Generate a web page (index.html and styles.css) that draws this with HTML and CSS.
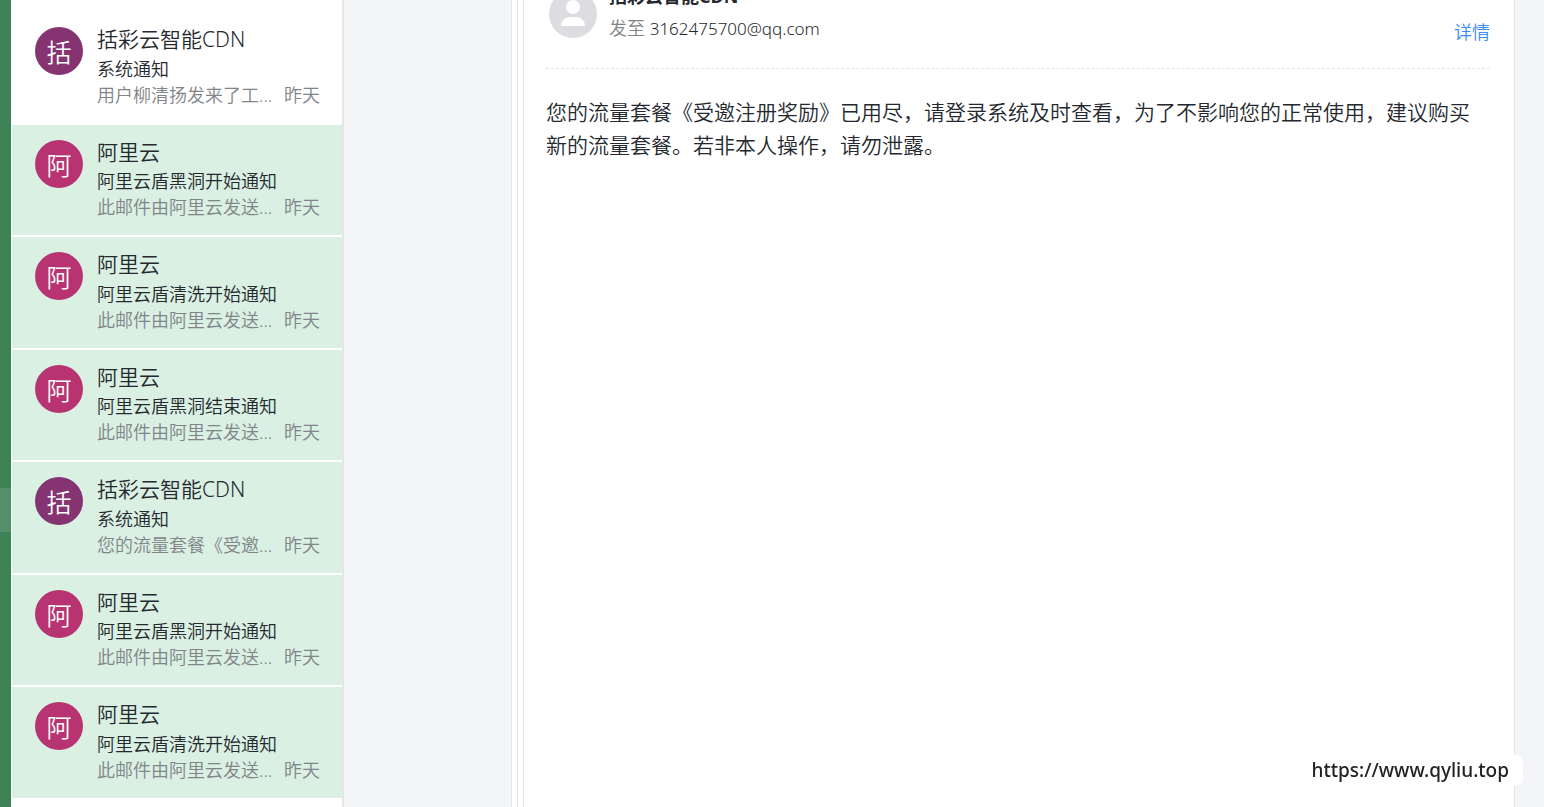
FILE: index.html
```html
<!DOCTYPE html>
<html lang="zh-CN">
<head>
  <meta charset="UTF-8">
  <meta name="viewport" content="width=device-width, initial-scale=1">
  <title>系统通知</title>
  <link rel="stylesheet" href="styles.css">
</head>
<body>
  <div class="app">

    <!-- Sidebar edge -->
    <nav class="sidebar" aria-label="Folders">
      <div class="sidebar-active"></div>
    </nav>

    <!-- Mail list -->
    <ul class="mail-list">
      <li class="mail unselected">
        <span class="avatar purple">括</span>
        <div class="mail-info">
          <div class="sender">括彩云智能CDN</div>
          <div class="subject">系统通知</div>
          <div class="preview"><span>用户柳清扬发来了工...</span><span>昨天</span></div>
        </div>
      </li>
      <li class="mail">
        <span class="avatar pink">阿</span>
        <div class="mail-info">
          <div class="sender">阿里云</div>
          <div class="subject">阿里云盾黑洞开始通知</div>
          <div class="preview"><span>此邮件由阿里云发送...</span><span>昨天</span></div>
        </div>
      </li>
      <li class="mail">
        <span class="avatar pink">阿</span>
        <div class="mail-info">
          <div class="sender">阿里云</div>
          <div class="subject">阿里云盾清洗开始通知</div>
          <div class="preview"><span>此邮件由阿里云发送...</span><span>昨天</span></div>
        </div>
      </li>
      <li class="mail">
        <span class="avatar pink">阿</span>
        <div class="mail-info">
          <div class="sender">阿里云</div>
          <div class="subject">阿里云盾黑洞结束通知</div>
          <div class="preview"><span>此邮件由阿里云发送...</span><span>昨天</span></div>
        </div>
      </li>
      <li class="mail">
        <span class="avatar purple">括</span>
        <div class="mail-info">
          <div class="sender">括彩云智能CDN</div>
          <div class="subject">系统通知</div>
          <div class="preview"><span>您的流量套餐《受邀...</span><span>昨天</span></div>
        </div>
      </li>
      <li class="mail">
        <span class="avatar pink">阿</span>
        <div class="mail-info">
          <div class="sender">阿里云</div>
          <div class="subject">阿里云盾黑洞开始通知</div>
          <div class="preview"><span>此邮件由阿里云发送...</span><span>昨天</span></div>
        </div>
      </li>
      <li class="mail">
        <span class="avatar pink">阿</span>
        <div class="mail-info">
          <div class="sender">阿里云</div>
          <div class="subject">阿里云盾清洗开始通知</div>
          <div class="preview"><span>此邮件由阿里云发送...</span><span>昨天</span></div>
        </div>
      </li>
    </ul>

    <!-- Reading pane -->
    <main class="pane">
      <div class="frame">
        <div class="frame-inner">
          <article class="message">
            <header class="message-header">
              <svg class="user-icon" viewBox="0 0 48 48" aria-hidden="true">
                <circle cx="24" cy="24" r="24" fill="#dcdde0"/>
                <circle cx="24" cy="17" r="7" fill="#fff"/>
                <path d="M12 36c0-5 4-9 9-9h6c5 0 9 4 9 9z" fill="#fff"/>
              </svg>
              <div class="message-from">
                <div class="from-name">括彩云智能CDN</div>
                <div class="to"><span class="to-label">发至</span> <span class="address">3162475700@qq.com</span></div>
              </div>
              <a class="detail" href="#detail">详情</a>
            </header>
            <p class="message-body">您的流量套餐《受邀注册奖励》已用尽，请登录系统及时查看，为了不影响您的正常使用，建议购买新的流量套餐。若非本人操作，请勿泄露。</p>
          </article>
        </div>
      </div>
    </main>
  </div>

  <div class="site-mark">https://www.qyliu.top</div>
</body>
</html>
```
FILE: styles.css
```css
* {
  box-sizing: border-box;
}

body {
  margin: 0;
  overflow: hidden;
  font-family: "Noto Sans", "Noto Sans CJK SC", sans-serif;
  font-weight: 350;
  color: #25292f;
  background-color: #f4f5f7;
}

.app {
  display: flex;
  height: 100vh;
}

/* Sidebar */
.sidebar {
  flex: 0 0 11px;
  display: grid;
  grid-template-rows: 488px 44px 1fr;
  background-color: #3d8356;
}

.sidebar-active {
  grid-row: 2;
  background-color: #558f6a;
}

/* Mail list */
.mail-list {
  flex: 0 0 333px;
  margin: 0;
  padding: 12px 0 0 1px;
  list-style: none;
  background-color: #fff;
  border-right: 2px solid #e6e6e6;
  overflow: hidden;
}

.mail {
  display: flex;
  gap: 14px;
  padding: 12px 22px 16px 23px;
  border-bottom: 2px solid #fff;
  background-color: #d9f0e3;
}

.mail.unselected {
  background-color: #fff;
}

.avatar {
  flex: none;
  width: 48px;
  height: 48px;
  margin-top: 3px;
  border-radius: 50%;
  color: #fff;
  font-size: 25px;
  line-height: 50px;
  text-align: center;
}

.purple {
  background-color: #853471;
}

.pink {
  background-color: #b73371;
}

.mail-info {
  flex: 1;
}

.sender {
  font-size: 21px;
  line-height: 1.5;
}

.subject {
  font-size: 18px;
  line-height: 27px;
}

.preview {
  display: flex;
  justify-content: space-between;
  font-size: 18px;
  line-height: 24px;
  white-space: nowrap;
  color: #818488;
}

/* Reading pane */
.pane {
  flex: 1;
  min-width: 0;
  display: flex;
  padding: 0 29px 0 167px;
}

.frame {
  flex: 1;
  display: flex;
  padding-left: 5px;
  background-color: #fff;
  border-left: 1px solid #e4e5e7;
  border-right: 1px solid #e4e5e7;
}

.frame-inner {
  flex: 1;
  display: flex;
  padding-left: 5px;
  border-left: 1px solid #e4e5e7;
}

.message {
  flex: 1;
  padding: 0 24px 0 22px;
  border-left: 1px solid #e4e5e7;
}

.message-header {
  display: flex;
  gap: 12px;
  margin-top: -21px;
  padding: 0 0 24px 3px;
  border-bottom: 1px dashed #e4e5e7;
}

.user-icon {
  flex: none;
  width: 48px;
  height: 48px;
  margin-top: 11px;
}

.message-from {
  flex: 1;
}

.from-name {
  font-size: 18px;
  font-weight: 700;
  line-height: 34px;
}

.to {
  font-size: 18px;
  line-height: 30px;
}

.to-label {
  color: #818488;
}

.address {
  font-size: 17px;
}

.detail {
  align-self: flex-end;
  color: #3b8cf5;
  font-size: 18px;
  line-height: 24px;
  text-decoration: none;
}

.message-body {
  margin: 27px 0 0;
  font-size: 21px;
  line-height: 33px;
}

/* Site address over the bottom right corner */
.site-mark {
  position: fixed;
  right: 21px;
  bottom: 21px;
  padding: 0 14px;
  border-radius: 8px;
  background-color: #fff;
  color: #222;
  font-size: 19px;
  font-weight: 500;
  line-height: 31px;
}
```
